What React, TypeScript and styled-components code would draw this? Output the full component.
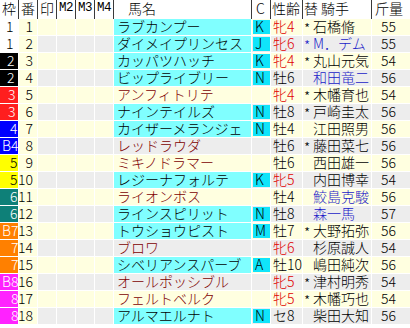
import React from 'react';
import styled, { createGlobalStyle } from 'styled-components';

const GlobalStyle = createGlobalStyle`
  html, body { margin: 0; padding: 0; background: #ffffff; }
  body { font-family: "Noto Sans CJK JP", "Noto Sans", sans-serif; }
`;

const COLS = '18px 18px 18px 18px 18px 18px 137px 18px 31px 68px 38px';

const YELLOW = '#FFFFE0';
const GRAY = '#EDEDED';
const CYAN = '#80FFFF';

const Table = styled.div`
  width: 410px;
  font-family: "Noto Sans CJK JP", "Noto Sans", sans-serif;
  font-weight: 300;
  font-size: 14px;
  color: #000;
  background: #ffffff;
`;

const Header = styled.div`
  display: grid;
  grid-template-columns: ${COLS};
  column-gap: 1px;
  height: 19px;
  background: #3a3a3a;
`;

const HeadCell = styled.div<{ $center?: boolean; $pad?: number; $mono?: boolean }>`
  background: #ffffff;
  display: flex;
  align-items: center;
  justify-content: ${(p) => (p.$center ? 'center' : 'flex-start')};
  padding-left: ${(p) => p.$pad ?? 0}px;
  padding-bottom: 2px;
  box-sizing: border-box;
  line-height: 17px;
  white-space: pre;
  font-family: ${(p) => (p.$mono ? '"Liberation Mono", monospace' : 'inherit')};
  font-size: ${(p) => (p.$mono ? '12.5px' : '14px')};
  letter-spacing: ${(p) => (p.$mono ? '-0.5px' : '0')};
`;

const Body = styled.div`
  display: flex;
  flex-direction: column;
  gap: 1px;
  background: #ffffff;
`;

const Row = styled.div`
  display: grid;
  grid-template-columns: ${COLS};
  column-gap: 1px;
  height: 16px;
`;

const Cell = styled.div<{ $bg: string; $color?: string; $pad?: number; $right?: boolean }>`
  background: ${(p) => p.$bg};
  color: ${(p) => p.$color ?? '#000'};
  display: flex;
  align-items: center;
  justify-content: ${(p) => (p.$right ? 'flex-end' : 'flex-start')};
  padding-left: ${(p) => (p.$right ? 0 : p.$pad ?? 0)}px;
  padding-right: ${(p) => (p.$right ? p.$pad ?? 0 : 0)}px;
  padding-bottom: 2px;
  box-sizing: border-box;
  height: 16px;
  line-height: 16px;
  white-space: pre;
`;

const FrameCell = styled.div<{ $bg: string; $fg: string; $pad: number }>`
  background: ${(p) => p.$bg};
  color: ${(p) => p.$fg};
  display: flex;
  align-items: center;
  padding-left: ${(p) => p.$pad}px;
  padding-bottom: 2px;
  box-sizing: border-box;
  height: 16px;
  line-height: 16px;
  white-space: pre;
`;

const CCell = styled.div<{ $bg: string }>`
  background: ${(p) => p.$bg};
  display: flex;
  align-items: stretch;
  height: 16px;
`;

const CBox = styled.div`
  background: #10E4FA;
  flex: 1;
  margin: 1px 0 1px 1px;
  display: flex;
  align-items: center;
  padding-left: 2px;
  padding-bottom: 2px;
  box-sizing: border-box;
  line-height: 14px;
`;

const Mark = styled.span`
  display: inline-block;
  width: 9px;
  padding-left: 1px;
  transform: translateY(2px);
`;

const frameStyles: Record<number, { bg: string; fg: string; pad: number }> = {
  1: { bg: '#ffffff', fg: '#000', pad: 6 },
  2: { bg: '#000000', fg: '#fff', pad: 7 },
  3: { bg: '#FF1E1E', fg: '#fff', pad: 8 },
  4: { bg: '#0000FF', fg: '#fff', pad: 10 },
  5: { bg: '#FFFF00', fg: '#000', pad: 10 },
  6: { bg: '#0E8078', fg: '#fff', pad: 10 },
  7: { bg: '#FF8000', fg: '#fff', pad: 11 },
  8: { bg: '#FF22FF', fg: '#fff', pad: 11 },
};

type Horse = {
  f: number;
  fl: string;
  n: number;
  name: string;
  cyan: boolean;
  c: string;
  sex: string;
  mark: boolean;
  jockey: string;
  blue?: boolean;
  w: number;
};

const horses: Horse[] = [
  { f: 1, fl: '1', n: 1, name: 'ラブカンプー', cyan: true, c: 'K', sex: '牝4', mark: true, jockey: '石橋脩', w: 55 },
  { f: 1, fl: '1', n: 2, name: 'ダイメイプリンセス', cyan: true, c: 'J', sex: '牝6', mark: true, jockey: 'M．デム', blue: true, w: 55 },
  { f: 2, fl: '2', n: 3, name: 'カッパツハッチ', cyan: true, c: 'K', sex: '牝4', mark: true, jockey: '丸山元気', w: 54 },
  { f: 2, fl: '2', n: 4, name: 'ビップライブリー', cyan: true, c: 'N', sex: '牡6', mark: false, jockey: '和田竜二', blue: true, w: 56 },
  { f: 3, fl: '3', n: 5, name: 'アンフィトリテ', cyan: false, c: '', sex: '牝4', mark: true, jockey: '木幡育也', w: 54 },
  { f: 3, fl: '3', n: 6, name: 'ナインテイルズ', cyan: true, c: 'N', sex: '牡8', mark: true, jockey: '戸崎圭太', w: 56 },
  { f: 4, fl: '4', n: 7, name: 'カイザーメランジェ', cyan: true, c: 'N', sex: '牡4', mark: false, jockey: '江田照男', w: 56 },
  { f: 4, fl: 'B4', n: 8, name: 'レッドラウダ', cyan: false, c: '', sex: '牡6', mark: true, jockey: '藤田菜七', w: 56 },
  { f: 5, fl: '5', n: 9, name: 'ミキノドラマー', cyan: false, c: '', sex: '牡6', mark: false, jockey: '西田雄一', w: 56 },
  { f: 5, fl: '5', n: 10, name: 'レジーナフォルテ', cyan: true, c: 'K', sex: '牝5', mark: false, jockey: '内田博幸', w: 54 },
  { f: 6, fl: '6', n: 11, name: 'ライオンボス', cyan: false, c: '', sex: '牡4', mark: false, jockey: '鮫島克駿', blue: true, w: 56 },
  { f: 6, fl: '6', n: 12, name: 'ラインスピリット', cyan: true, c: 'N', sex: '牡8', mark: false, jockey: '森一馬', blue: true, w: 57 },
  { f: 7, fl: 'B7', n: 13, name: 'トウショウピスト', cyan: true, c: 'M', sex: '牡7', mark: true, jockey: '大野拓弥', w: 56 },
  { f: 7, fl: '7', n: 14, name: 'ブロワ', cyan: false, c: '', sex: '牝6', mark: false, jockey: '杉原誠人', w: 54 },
  { f: 7, fl: '7', n: 15, name: 'シベリアンスパーブ', cyan: true, c: 'A', sex: '牡10', mark: false, jockey: '嶋田純次', w: 56 },
  { f: 8, fl: 'B8', n: 16, name: 'オールポッシブル', cyan: false, c: '', sex: '牝5', mark: true, jockey: '津村明秀', w: 54 },
  { f: 8, fl: '8', n: 17, name: 'フェルトベルク', cyan: false, c: '', sex: '牝5', mark: true, jockey: '木幡巧也', w: 54 },
  { f: 8, fl: '8', n: 18, name: 'アルマエルナト', cyan: true, c: 'N', sex: 'セ8', mark: false, jockey: '柴田大知', w: 56 },
];

export default function App() {
  return (
    <>
      <GlobalStyle />
      <Table>
        <Header>
          <HeadCell $center>枠</HeadCell>
          <HeadCell $center>番</HeadCell>
          <HeadCell $center>印</HeadCell>
          <HeadCell $pad={2} $mono>M2</HeadCell>
          <HeadCell $pad={2} $mono>M3</HeadCell>
          <HeadCell $pad={2} $mono>M4</HeadCell>
          <HeadCell $pad={14}>馬名</HeadCell>
          <HeadCell $pad={4}>C</HeadCell>
          <HeadCell $pad={1}>性齢</HeadCell>
          <HeadCell $pad={1}>替 騎手</HeadCell>
          <HeadCell $pad={3}>斤量</HeadCell>
        </Header>
        <Body>
          {horses.map((h) => {
            const bg = h.n % 2 === 1 ? YELLOW : GRAY;
            const fs = frameStyles[h.f];
            const isB = h.fl.startsWith('B');
            return (
              <Row key={h.n}>
                <FrameCell $bg={fs.bg} $fg={fs.fg} $pad={isB ? 2 : fs.pad}>
                  {h.fl}
                </FrameCell>
                <Cell $bg={YELLOW} $right $pad={4}>
                  {h.n}
                </Cell>
                <Cell $bg={bg} />
                <Cell $bg={bg} />
                <Cell $bg={bg} />
                <Cell $bg={bg} />
                <Cell $bg={h.cyan ? CYAN : bg} $color={h.cyan ? '#000' : '#800000'} $pad={3}>
                  {h.name}
                </Cell>
                <CCell $bg={bg}>{h.c ? <CBox>{h.c}</CBox> : null}</CCell>
                <Cell $bg={bg} $color={h.sex.startsWith('牝') ? '#E00000' : '#000'} $pad={2}>
                  {h.sex}
                </Cell>
                <Cell $bg={bg} $color={h.blue ? '#1A1AC8' : '#000'} $pad={0}>
                  <Mark>{h.mark ? '*' : ''}</Mark>
                  {h.jockey}
                </Cell>
                <Cell $bg={bg} $pad={9}>
                  {h.w}
                </Cell>
              </Row>
            );
          })}
        </Body>
      </Table>
    </>
  );
}
